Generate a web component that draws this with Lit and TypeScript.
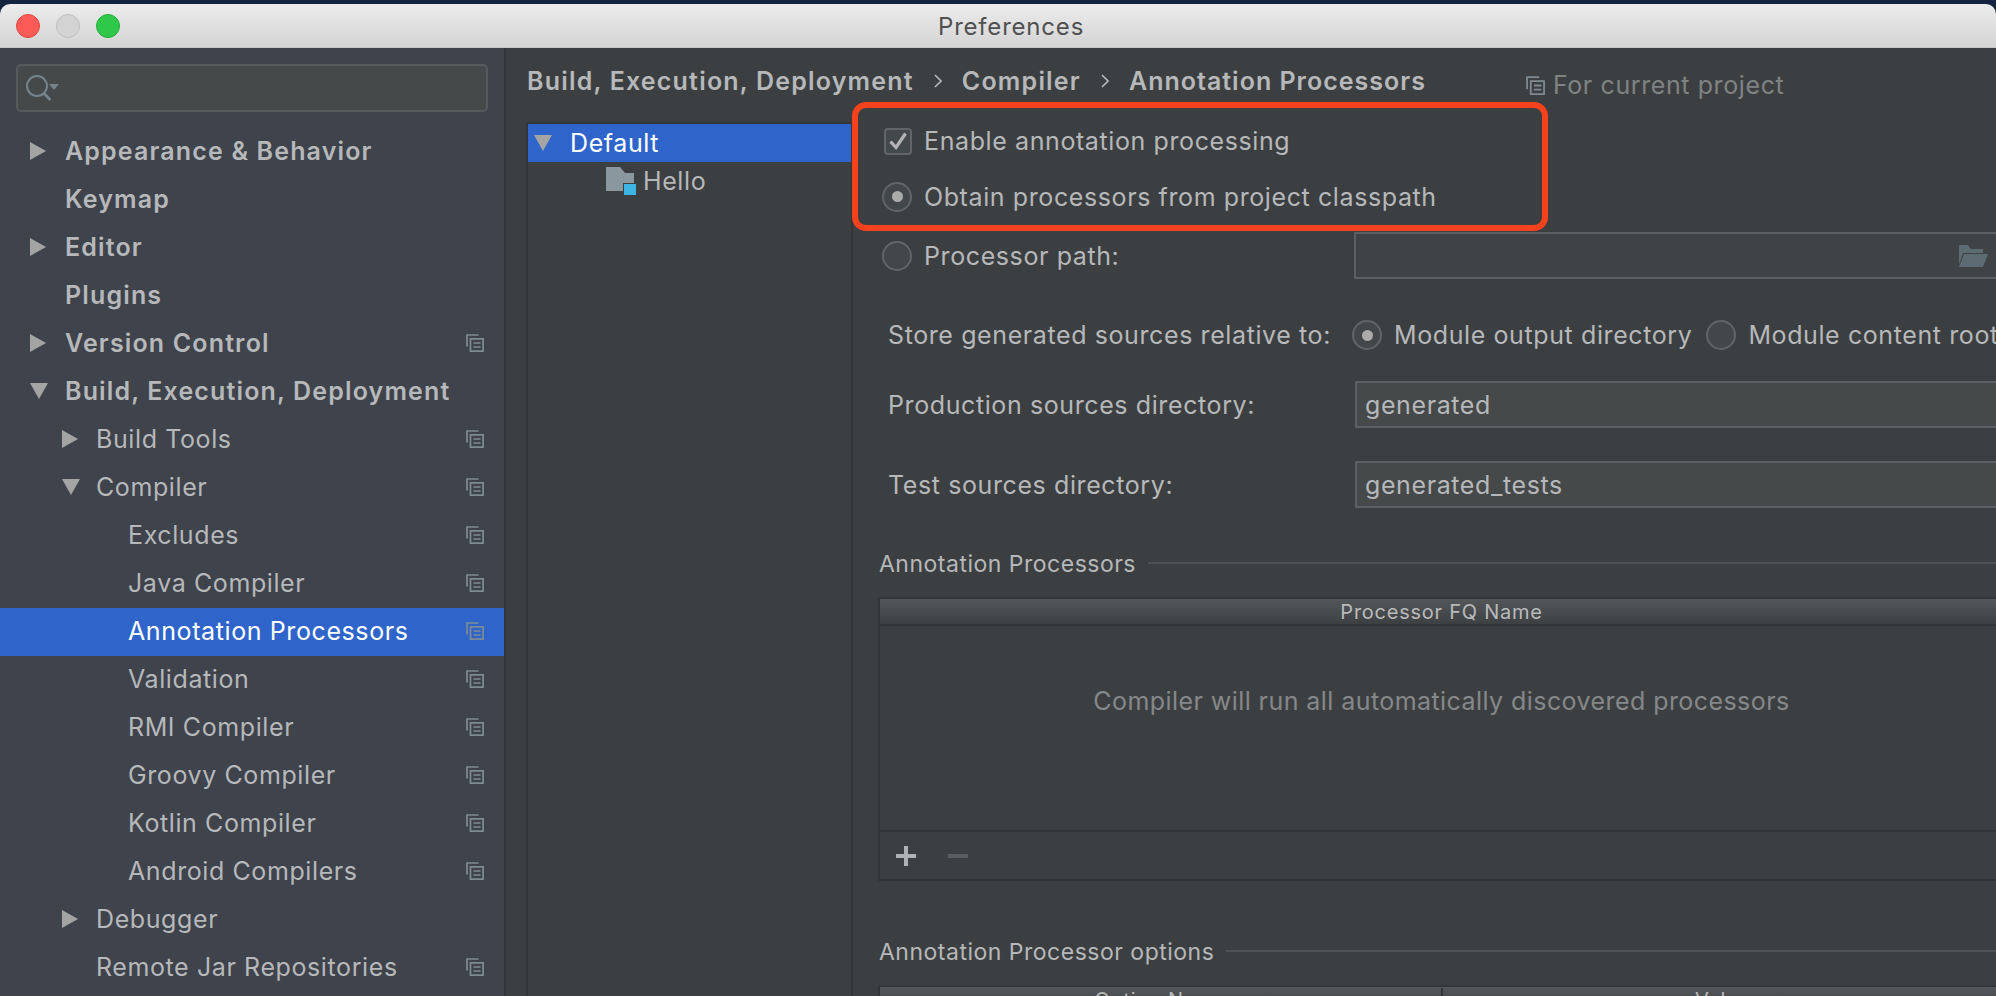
import { LitElement, html, css, svg } from "lit";
import { customElement } from "lit/decorators.js";

type Row = { t: string; lvl: number; arrow?: "r" | "d"; bold?: boolean; icon?: boolean; sel?: boolean };

const ROWS: Row[] = [
  { t: "Appearance & Behavior", lvl: 0, arrow: "r", bold: true },
  { t: "Keymap", lvl: 0, bold: true },
  { t: "Editor", lvl: 0, arrow: "r", bold: true },
  { t: "Plugins", lvl: 0, bold: true },
  { t: "Version Control", lvl: 0, arrow: "r", bold: true, icon: true },
  { t: "Build, Execution, Deployment", lvl: 0, arrow: "d", bold: true },
  { t: "Build Tools", lvl: 1, arrow: "r", icon: true },
  { t: "Compiler", lvl: 1, arrow: "d", icon: true },
  { t: "Excludes", lvl: 2, icon: true },
  { t: "Java Compiler", lvl: 2, icon: true },
  { t: "Annotation Processors", lvl: 2, icon: true, sel: true },
  { t: "Validation", lvl: 2, icon: true },
  { t: "RMI Compiler", lvl: 2, icon: true },
  { t: "Groovy Compiler", lvl: 2, icon: true },
  { t: "Kotlin Compiler", lvl: 2, icon: true },
  { t: "Android Compilers", lvl: 2, icon: true },
  { t: "Debugger", lvl: 1, arrow: "r" },
  { t: "Remote Jar Repositories", lvl: 1, icon: true },
];

const copyIcon = (cls = "copy") => html`<svg class=${cls} viewBox="0 0 18 18" fill="none" stroke="#7f8b93" stroke-width="1.7">
  <path d="M12.5 1H1v11.5" /><path d="M4.5 4.8h12.6v12.4H4.5z" /><path d="M7.5 9h7M7.5 13h7" />
</svg>`;

const arrow = (d: "r" | "d") =>
  d === "r"
    ? svg`<svg class="arrow" viewBox="0 0 16 18"><path d="M0 0l16 9L0 18z" fill="#a4a4a4"/></svg>`
    : svg`<svg class="arrow down" viewBox="0 0 18 16"><path d="M0 0h18L9 16z" fill="#a4a4a4"/></svg>`;

@customElement("app-root")
export class AppRoot extends LitElement {
  static styles = css`
    :host {
      display: block;
      width: 1996px;
      height: 996px;
      overflow: hidden;
      background: #14233f;
      font-family: Inter, "Liberation Sans", sans-serif;
      font-size: 25px;
      letter-spacing: 0.6px;
      color: #b6b8ba;
    }
    .window {
      margin-top: 4px;
      height: 992px;
      border-radius: 10px 10px 0 0;
      overflow: hidden;
      display: flex;
      flex-direction: column;
      position: relative;
    }
    .titlebar {
      height: 44px;
      box-sizing: border-box;
      flex: none;
      display: flex;
      align-items: center;
      padding-left: 16px;
      background: linear-gradient(#ececec, #d4d4d4);
      border-bottom: 1px solid #c6c6c6;
    }
    .light {
      width: 24px;
      height: 24px;
      border-radius: 50%;
      box-sizing: border-box;
      margin-right: 16px;
      flex: none;
    }
    .red { background: #fc5b57; border: 1px solid #e2463f; }
    .gray { background: #d4d4d4; border: 1px solid #bdbdbd; }
    .green { background: #2fc84a; border: 1px solid #25ad3a; }
    .title {
      margin-left: 802px;
      padding-top: 2px;
      font-size: 24px;
      color: #505050;
      letter-spacing: 0.8px;
    }
    .body { flex: 1; display: flex; min-height: 0; }
    .sidebar {
      width: 506px;
      flex: none;
      box-sizing: border-box;
      background: #3f434c;
      border-right: 2px solid #333536;
      padding-top: 16px;
      overflow: hidden;
    }
    .search {
      margin-left: 16px;
      width: 472px;
      height: 48px;
      box-sizing: border-box;
      background: #45494a;
      border: 2px solid #57595b;
      border-radius: 5px;
      display: flex;
      align-items: center;
      padding-left: 8px;
    }
    .search svg { width: 34px; height: 26px; }
    .tree { margin-top: 16px; }
    .row {
      height: 48px;
      display: flex;
      align-items: center;
      position: relative;
      padding-bottom: 2px;
      box-sizing: border-box;
      white-space: nowrap;
    }
    .row.sel { background: #2f65ca; color: #fff; }
    .row.bold { font-weight: 600; letter-spacing: 1.15px; }
    .lvl0 { padding-left: 65px; }
    .lvl1 { padding-left: 96px; }
    .lvl2 { padding-left: 128px; }
    .arrow { position: absolute; width: 16px; height: 18px; }
    .arrow.down { width: 18px; height: 16px; }
    .lvl0 .arrow { left: 30px; }
    .lvl1 .arrow { left: 62px; }
    .copy { position: absolute; left: 466px; width: 18px; height: 18px; }
    .main {
      flex: 1;
      min-width: 0;
      background: #3c3f41;
      overflow: hidden;
      display: flex;
      flex-direction: column;
    }
    .crumbs {
      height: 74px;
      flex: none;
      box-sizing: border-box;
      padding: 0 0 8px 21px;
      display: flex;
      align-items: center;
      font-weight: 600;
      letter-spacing: 1.2px;
      white-space: nowrap;
    }
    .crumb-last { letter-spacing: 1px; }
    .chev { width: 8px; height: 14px; margin: 0 20px; flex: none; }
    .scope {
      margin-left: 100px;
      display: flex;
      align-items: center;
      gap: 8px;
      font-weight: 400;
      letter-spacing: 0.6px;
      color: #7f8384;
      padding-top: 8px;
    }
    .scope svg { width: 19px; height: 19px; }
    .panes { flex: 1; display: flex; min-height: 0; }
    .cfg {
      margin-left: 20px;
      width: 327px;
      flex: none;
      box-sizing: border-box;
      border: solid #333536;
      border-width: 2px 2px 0 2px;
    }
    .cfg-row {
      height: 38px;
      display: flex;
      align-items: center;
      position: relative;
      white-space: nowrap;
    }
    .cfg-row.on { background: #2f65ca; color: #fff; }
    .cfg-row .arrow { left: 6px; }
    .cfg-text { margin-left: 42px; }
    .module { padding-left: 78px; gap: 7px; }
    .module svg { width: 30px; height: 28px; flex: none; }
    .form { flex: 1; min-width: 0; padding-left: 25px; white-space: nowrap; }
    .opt { display: flex; align-items: center; padding-left: 4px; }
    .opt1 { height: 38px; }
    .opt2 { height: 72px; box-sizing: border-box; padding-top: 1px; }
    .opt3 { height: 47px; }
    .check {
      width: 28px;
      height: 27px;
      box-sizing: border-box;
      margin: 0 12px 0 2px;
      border: 2px solid #626566;
      border-radius: 4px;
      background: #43494a;
      flex: none;
      display: block;
    }
    .check svg { display: block; width: 24px; height: 23px; }
    .radio {
      width: 30px;
      height: 30px;
      box-sizing: border-box;
      margin-right: 12px;
      border: 2px solid #626566;
      border-radius: 50%;
      background: #42474a;
      flex: none;
      display: flex;
      align-items: center;
      justify-content: center;
    }
    .radio.on::after {
      content: "";
      width: 11px;
      height: 11px;
      border-radius: 50%;
      background: #ababab;
    }
    .label { width: 467px; flex: none; }
    .opt3 .label { width: 430px; }
    .field {
      width: 660px;
      flex: none;
      box-sizing: border-box;
      border: 2px solid #5d5f60;
      background: #45494a;
      display: flex;
      align-items: center;
      padding-left: 8px;
      position: relative;
    }
    .opt3 .field { height: 47px; background: #3f4345; }
    .folder { position: absolute; left: 601px; width: 31px; height: 22px; }
    .store { height: 42px; margin-top: 35px; padding-left: 10px; }
    .store .label { width: 464px; }
    .store .gap { margin-right: 14px; }
    .prod { height: 47px; margin-top: 25px; padding-left: 10px; }
    .prod .field { height: 47px; }
    .test { margin-top: 33px; }
    .sec {
      height: 30px;
      display: flex;
      align-items: center;
      gap: 12px;
      padding-left: 1px;
      font-size: 23px;
      letter-spacing: 0.5px;
    }
    .sec i { flex: 1; height: 2px; background: #4f5152; margin-top: -2px; }
    .sec1 { margin-top: 41px; }
    .sec2 { margin-top: 56px; }
    .table {
      width: 1127px;
      margin-top: 18px;
      box-sizing: border-box;
      border: 2px solid #333536;
    }
    .th {
      height: 27px;
      box-sizing: border-box;
      border-bottom: 2px solid #333536;
      background: linear-gradient(#53575a, #3d4043);
      font-size: 20px;
      letter-spacing: 0.75px;
      display: flex;
      align-items: center;
      justify-content: center;
      color: #b9babb;
    }
    .tb {
      height: 204px;
      box-sizing: border-box;
      padding-bottom: 54px;
      display: flex;
      align-items: center;
      justify-content: center;
      color: #85888a;
      letter-spacing: 0.43px;
    }
    .tf {
      height: 49px;
      box-sizing: border-box;
      border-top: 2px solid #333536;
      display: flex;
      align-items: center;
      padding-left: 16px;
      gap: 32px;
    }
    .tf svg { width: 20px; height: 20px; }
    .th2 { display: grid; grid-template-columns: 561px 1fr; }
    .th2 span { text-align: center; }
    .th2 span + span { border-left: 2px solid #333536; }
    .mark {
      position: absolute;
      left: 852px;
      top: 98px;
      width: 696px;
      height: 129px;
      box-sizing: border-box;
      border: 6px solid #f4431c;
      border-radius: 14px;
      pointer-events: none;
    }
  `;

  render() {
    return html`
      <div class="window">
        <div class="titlebar">
          <span class="light red"></span><span class="light gray"></span><span class="light green"></span>
          <span class="title">Preferences</span>
        </div>
        <div class="body">
          <aside class="sidebar">
            <div class="search">
              <svg viewBox="0 0 34 26" fill="none">
                <circle cx="11" cy="11" r="10" stroke="#75848c" stroke-width="2" />
                <path d="M17.5 18l7 7" stroke="#75848c" stroke-width="2.6" />
                <path d="M23 9h10l-5 6z" fill="#75848c" />
              </svg>
            </div>
            <div class="tree">
              ${ROWS.map(
                (r) => html`<div class="row lvl${r.lvl} ${r.bold ? "bold" : ""} ${r.sel ? "sel" : ""}">
                  ${r.arrow ? arrow(r.arrow) : ""}<span>${r.t}</span>${r.icon ? copyIcon() : ""}
                </div>`
              )}
            </div>
          </aside>
          <main class="main">
            <div class="crumbs">
              <span>Build, Execution, Deployment</span>
              <svg class="chev" viewBox="0 0 8 14" fill="none" stroke="#b6b8ba" stroke-width="1.6"><path d="M1 1l6 6-6 6" /></svg>
              <span>Compiler</span>
              <svg class="chev" viewBox="0 0 8 14" fill="none" stroke="#b6b8ba" stroke-width="1.6"><path d="M1 1l6 6-6 6" /></svg>
              <span class="crumb-last">Annotation Processors</span>
              <span class="scope">${copyIcon("scope-icon")}For current project</span>
            </div>
            <div class="panes">
              <div class="cfg">
                <div class="cfg-row on">${arrow("d")}<span class="cfg-text">Default</span></div>
                <div class="cfg-row module">
                  <svg viewBox="0 0 30 28">
                    <path d="M0 0h14l5 6h9v18H0z" fill="#8a979f" />
                    <path d="M17 16h13v12H17z" fill="#3c3f41" />
                    <path d="M18 17h12v11H18z" fill="#3cb4e4" />
                  </svg>
                  <span>Hello</span>
                </div>
              </div>
              <div class="form">
                <div class="opt opt1">
                  <span class="check"><svg viewBox="0 0 24 23" fill="none" stroke="#b4b4b4" stroke-width="3.2"><path d="M4.5 11.5l5.5 6 9.5-14" /></svg></span>
                  <span>Enable annotation processing</span>
                </div>
                <div class="opt opt2"><span class="radio on"></span><span>Obtain processors from project classpath</span></div>
                <div class="opt opt3">
                  <span class="radio"></span><span class="label">Processor path:</span>
                  <span class="field">
                    <svg class="folder" viewBox="0 0 31 22"><path d="M2 0h9l3 4h12v4H6L2 20z" fill="#5d6b72" /><path d="M7 9h24l-5 13H2z" fill="#5d6b72" /></svg>
                  </span>
                </div>
                <div class="opt store">
                  <span class="label">Store generated sources relative to:</span>
                  <span class="radio on"></span><span class="gap">Module output directory</span>
                  <span class="radio"></span><span>Module content root</span>
                </div>
                <div class="opt prod"><span class="label">Production sources directory:</span><span class="field">generated</span></div>
                <div class="opt prod test"><span class="label">Test sources directory:</span><span class="field">generated_tests</span></div>
                <div class="sec sec1"><span>Annotation Processors</span><i></i></div>
                <div class="table">
                  <div class="th">Processor FQ Name</div>
                  <div class="tb">Compiler will run all automatically discovered processors</div>
                  <div class="tf">
                    <svg viewBox="0 0 20 20"><path d="M8 0h4v8h8v4h-8v8H8v-8H0V8h8z" fill="#b0b2b4" /></svg>
                    <svg viewBox="0 0 20 20"><path d="M0 8h20v4H0z" fill="#5a5d5f" /></svg>
                  </div>
                </div>
                <div class="sec sec2"><span>Annotation Processor options</span><i></i></div>
                <div class="table">
                  <div class="th th2"><span>Option Name</span><span>Value</span></div>
                </div>
              </div>
            </div>
          </main>
        </div>
        <div class="mark"></div>
      </div>
    `;
  }
}
